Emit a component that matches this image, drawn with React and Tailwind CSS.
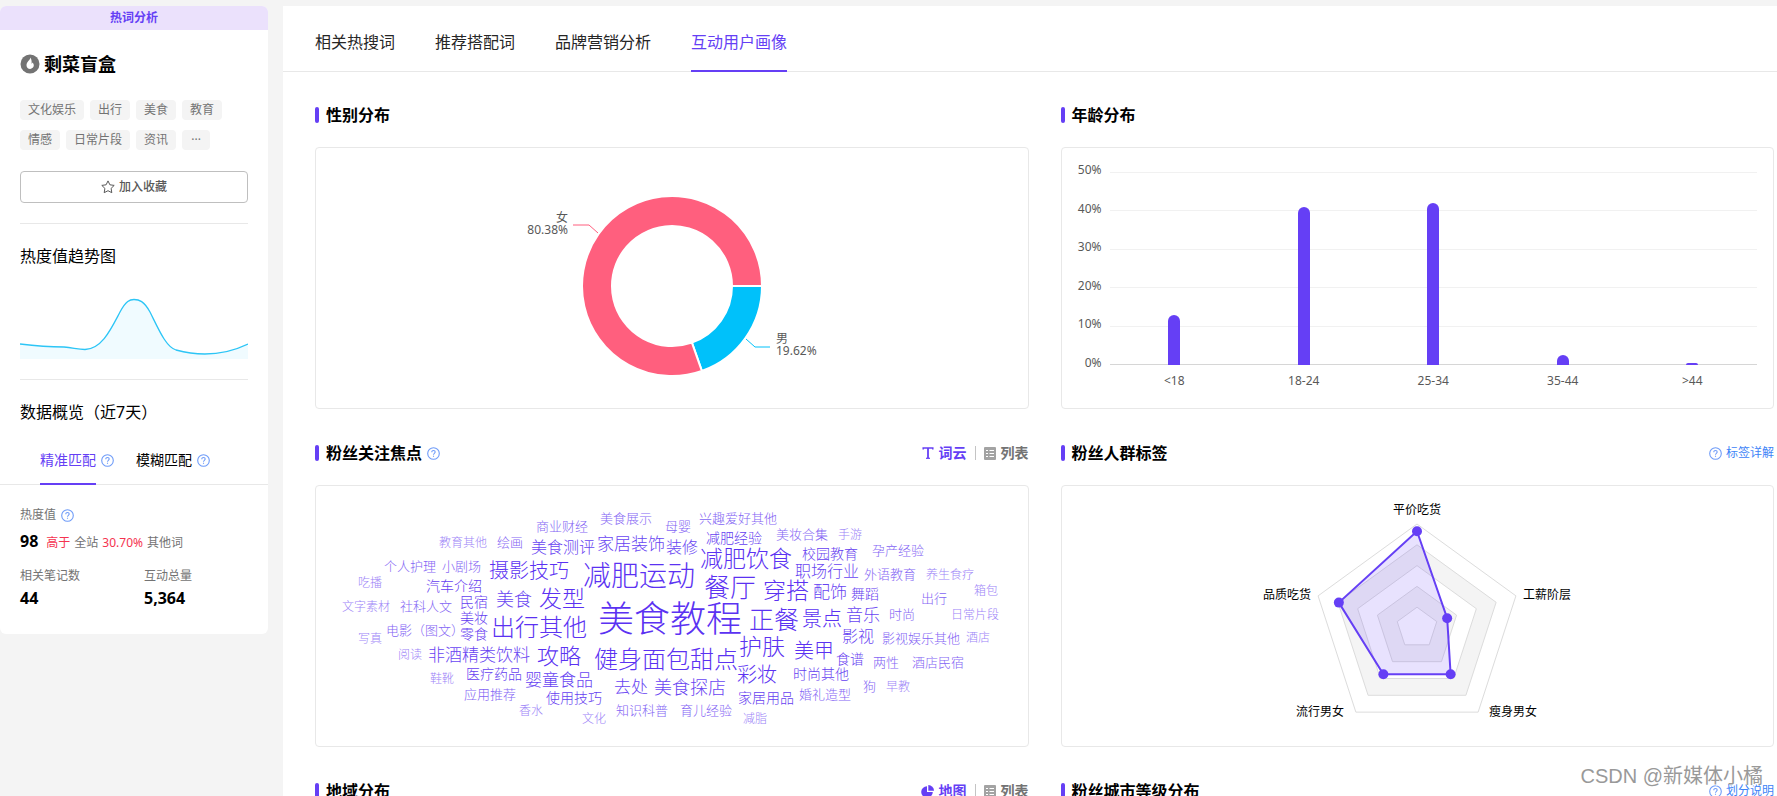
import React from "react";

const tags = ["文化娱乐", "出行", "美食", "教育", "情感", "日常片段", "资讯", "···"];

const ages = [
  { label: "<18", value: 13 },
  { label: "18-24", value: 41 },
  { label: "25-34", value: 42 },
  { label: "35-44", value: 2.6 },
  { label: ">44", value: 0.5 },
];

// [text, left, middle, font size] inside the 712 x 260 cloud
const words = [
  ["美食教程", 282, 133, 36],
  ["减肥运动", 267, 89, 28],
  ["餐厅", 388, 101, 26],
  ["正餐", 433, 133, 25],
  ["出行其他", 175, 141, 24],
  ["健身面包甜点", 278, 173, 24],
  ["发型", 223, 112, 23],
  ["减肥饮食", 384, 72, 23],
  ["穿搭", 447, 104, 23],
  ["护肤", 423, 160, 23],
  ["攻略", 221, 169, 22],
  ["摄影技巧", 173, 85, 20],
  ["景点", 486, 133, 20],
  ["美甲", 478, 165, 20],
  ["彩妆", 421, 189, 20],
  ["美食", 180, 113, 18],
  ["美食探店", 338, 201, 18],
  ["家居装饰", 281, 57, 17],
  ["非酒精类饮料", 112, 168, 17],
  ["婴童食品", 209, 193, 17],
  ["去处", 298, 200, 17],
  ["配饰", 497, 105, 17],
  ["音乐", 530, 128, 17],
  ["美食测评", 215, 61, 16],
  ["装修", 350, 61, 16],
  ["职场行业", 479, 85, 16],
  ["影视", 526, 150, 16],
  ["汽车介绍", 110, 100, 14],
  ["民宿", 144, 116, 14],
  ["美妆", 144, 132, 14],
  ["零食", 144, 148, 14],
  ["医疗药品", 150, 188, 14],
  ["使用技巧", 230, 212, 14],
  ["减肥经验", 390, 52, 14],
  ["校园教育", 486, 68, 14],
  ["舞蹈", 535, 108, 14],
  ["食谱", 520, 173, 14],
  ["时尚其他", 477, 188, 14],
  ["家居用品", 422, 212, 14],
  ["商业财经", 220, 40, 13],
  ["美食展示", 284, 32, 13],
  ["母婴", 349, 40, 13],
  ["绘画", 181, 56, 13],
  ["个人护理", 68, 80, 13],
  ["小剧场", 126, 80, 13],
  ["社科人文", 84, 120, 13],
  ["电影（图文）", 70, 144, 13],
  ["应用推荐", 148, 208, 13],
  ["知识科普", 300, 224, 13],
  ["兴趣爱好其他", 383, 32, 13],
  ["美妆合集", 460, 48, 13],
  ["孕产经验", 556, 64, 13],
  ["外语教育", 548, 88, 13],
  ["出行", 605, 112, 13],
  ["时尚", 573, 128, 13],
  ["影视娱乐其他", 566, 152, 13],
  ["两性", 557, 176, 13],
  ["酒店民宿", 596, 176, 13],
  ["婚礼造型", 483, 208, 13],
  ["狗", 547, 200, 13],
  ["育儿经验", 364, 224, 13],
  ["教育其他", 123, 57, 12],
  ["吃播", 42, 97, 12],
  ["文字素材", 26, 121, 12],
  ["写真", 42, 153, 12],
  ["阅读", 82, 169, 12],
  ["鞋靴", 114, 193, 12],
  ["香水", 203, 225, 12],
  ["文化", 266, 233, 12],
  ["手游", 522, 49, 12],
  ["养生食疗", 610, 89, 12],
  ["箱包", 658, 105, 12],
  ["日常片段", 635, 129, 12],
  ["酒店", 650, 152, 12],
  ["早教", 570, 201, 12],
  ["减脂", 427, 233, 12],
];

const wordTone = (size) => {
  if (size >= 20) return "text-[#5b32f2]";
  if (size >= 16) return "text-[#6844f2]";
  if (size >= 14) return "text-[#6640f0]";
  if (size >= 13) return "text-[#8465f4]";
  return "text-[#9c84f7]";
};

const HelpIcon = () => (
  <svg className="w-[13px] h-[13px] shrink-0" viewBox="0 0 13 13" fill="none" stroke="#6f9cf8" strokeWidth="1.1" aria-hidden>
    <circle cx="6.5" cy="6.5" r="5.8" />
    <path d="M4.8 5.2c0-1 .7-1.7 1.7-1.7s1.7.7 1.7 1.6c0 1.2-1.7 1.3-1.7 2.6" />
    <path d="M6.5 8.7v1.1" />
  </svg>
);

const ListIcon = () => (
  <svg className="w-3 h-[13px]" viewBox="0 0 12 13" aria-hidden>
    <rect width="12" height="13" rx="1" fill="#a3a3a3" />
    <path d="M2 3.5h2M5.5 3.5H10M2 6.5h2M5.5 6.5H10M2 9.5h2M5.5 9.5H10" stroke="#fff" strokeWidth="1.2" />
  </svg>
);

const TextIcon = () => (
  <svg className="w-3 h-3" viewBox="0 0 12 12" fill="none" stroke="#653ff5" aria-hidden>
    <path d="M1.2 2.6V1h9.6v1.600" strokeWidth="1.5" />
    <path d="M6 1v10" strokeWidth="1.8" />
    <path d="M4 11.3h4" strokeWidth="1.2" />
  </svg>
);

const PieIcon = () => (
  <svg className="w-[13px] h-[13px]" viewBox="0 0 13 13" fill="#653ff5" aria-hidden>
    <path d="M6 1.2A5.8 5.8 0 1 0 11.8 7H6z" />
    <path d="M7.3 0v5.7H13A5.7 5.7 0 0 0 7.3 0z" />
  </svg>
);

function ViewSwitch({ icon, label }) {
  return (
    <div className="flex items-center text-sm font-bold">
      <button className="flex items-center gap-[5px] text-[#653ff5]">{icon}{label}</button>
      <span className="w-px h-3.5 mx-2 bg-[#c4c4c4]" />
      <button className="flex items-center gap-[5px] text-[#737373]"><ListIcon />列表</button>
    </div>
  );
}

const HelpLink = ({ children }) => (
  <a href="#help" className="flex items-center gap-1 text-xs text-[#3d83f7]"><HelpIcon />{children}</a>
);

function Section({ title, help, extra, children }) {
  return (
    <section>
      <div className="flex items-center justify-between h-6 mb-5">
        <h2 className="flex items-center text-base font-bold text-black">
          <span className="w-1 h-4 mr-[7px] rounded-sm bg-[#653ff5]" />
          {title}
          {help && <span className="ml-[5px]"><HelpIcon /></span>}
        </h2>
        {extra}
      </div>
      <div className="h-[262px] border border-[#e8e8e8] rounded">{children}</div>
    </section>
  );
}

const polar = (cx, cy, r, deg) => {
  const a = (deg * Math.PI) / 180;
  return [cx + r * Math.cos(a), cy + r * Math.sin(a)];
};

function arc(from, to, outer, inner) {
  const large = to - from > 180 ? 1 : 0;
  const [a, b, c, d] = [polar(180, 138, outer, from), polar(180, 138, outer, to), polar(180, 138, inner, to), polar(180, 138, inner, from)];
  return `M${a} A${outer} ${outer} 0 ${large} 1 ${b} L${c} A${inner} ${inner} 0 ${large} 0 ${d} Z`;
}

function GenderChart() {
  const split = 0.1962 * 360;
  return (
    <svg className="block mx-auto w-[360px] h-[260px] text-xs" viewBox="0 0 360 260">
      <g stroke="#fff" strokeWidth="2">
        <path d={arc(0, split, 90, 60)} fill="#00c1fa" />
        <path d={arc(split, 360, 90, 60)} fill="#ff5f7e" />
      </g>
      <path d="M81 77h16l9 8" fill="none" stroke="#ff5f7e" />
      <path d="M254 191l9 8h15" fill="none" stroke="#00c1fa" />
      <g fill="#595959">
        <text x="76" y="74" textAnchor="end">女</text>
        <text x="76" y="86" textAnchor="end">80.38%</text>
        <text x="284" y="195">男</text>
        <text x="284" y="207">19.62%</text>
      </g>
    </svg>
  );
}

function AgeChart() {
  return (
    <div className="flex gap-2 pt-6 pr-4 text-xs text-[#595959]">
      <div className="flex flex-col justify-between w-10 h-[209px] -mt-2.5 text-right leading-4">
        {[50, 40, 30, 20, 10, 0].map((n) => <span key={n}>{n}%</span>)}
      </div>
      <div className="flex-1">
        <div className="relative h-[193px]">
          <div className="absolute inset-0 flex flex-col justify-between">
            {[0, 1, 2, 3, 4].map((n) => <div key={n} className="h-px bg-[#f1f1f1]" />)}
            <div className="h-px bg-[#d6d6d6]" />
          </div>
          <div className="relative grid grid-cols-5 items-end justify-items-center h-full">
            {ages.map((a) => (
              <div key={a.label} className="w-3 rounded-t-full bg-[#653ff5]" style={{ height: `${a.value * 2}%` }} />
            ))}
          </div>
        </div>
        <div className="grid grid-cols-5 mt-2 text-center leading-4">
          {ages.map((a) => <span key={a.label}>{a.label}</span>)}
        </div>
      </div>
    </div>
  );
}

function WordCloud() {
  return (
    <div className="relative w-[712px] h-[260px] mx-auto">
      {words.map(([text, left, middle, size]) => (
        <span
          key={text}
          className={`absolute -translate-y-1/2 whitespace-nowrap leading-none font-light ${wordTone(size)}`}
          style={{ left, top: middle, fontSize: size }}
        >
          {text}
        </span>
      ))}
    </div>
  );
}

function RadarChart() {
  const values = [0.93, 0.305, 0.55, 0.55, 0.79];
  const point = (r, i) => polar(180, 142, r, i * 72 - 90);
  const ring = (r) => values.map((_, i) => point(r, i)).join(" ");
  const dots = values.map((v, i) => point(v * 104, i));
  return (
    <svg className="block mx-auto w-[360px] h-[260px] text-xs" viewBox="0 0 360 260">
      {[5, 4, 3, 2, 1].map((n) => (
        <polygon key={n} points={ring(n * 20.8)} fill={n % 2 ? "#fff" : "#f4f4f4"} stroke="#dcdcdc" />
      ))}
      <polygon points={dots.join(" ")} fill="#653ff5" fillOpacity="0.15" stroke="#653ff5" strokeWidth="2" />
      {dots.map(([x, y], i) => <circle key={i} cx={x} cy={y} r="5" fill="#653ff5" />)}
      <text x="180" y="28" textAnchor="middle">平价吃货</text>
      <text x="286" y="113">工薪阶层</text>
      <text x="252" y="230">瘦身男女</text>
      <text x="107" y="230" textAnchor="end">流行男女</text>
      <text x="74" y="113" textAnchor="end">品质吃货</text>
    </svg>
  );
}

function Sidebar() {
  return (
    <aside className="w-[268px] shrink-0 self-start pb-6 bg-white rounded-md overflow-hidden">
      <div className="h-6 bg-[#ebe1fc] text-center text-xs leading-6 font-bold text-[#653ff5]">热词分析</div>

      <div className="px-5">
        <h1 className="flex items-center gap-1 h-7 mt-5 text-lg leading-6 font-bold text-black">
          <svg className="w-5 h-5" viewBox="0 0 20 20" aria-hidden>
            <circle cx="10" cy="10" r="9.5" fill="#737373" />
            <path d="M10.4 3.6c.3 2-3.9 4.200-3.900 7.600 0 2.300 1.600 3.700 3.600 3.700s3.700-1.500 3.700-3.600c0-1.300-.6-2.300-1.300-2.900-.1.700-.4 1.100-.9 1.300.3-2.400-.2-4.600-1.200-6.100z" fill="#fff" />
          </svg>
          剩菜盲盒
        </h1>

        <ul className="flex flex-wrap gap-x-1.5 gap-y-2.5 mt-[22px] text-xs text-[#737373]">
          {tags.map((t) => <li key={t} className="min-w-7 px-2 text-center leading-5 bg-[#f4f4f4] rounded-sm">{t}</li>)}
        </ul>

        <button className="flex items-center justify-center gap-1 w-full h-8 mt-[21px] border border-[#bfbfbf] rounded-sm text-xs font-medium text-[#595959]">
          <svg className="w-3.5 h-3.5" viewBox="0 0 14 14" fill="none" stroke="currentColor" strokeLinejoin="round" aria-hidden>
            <path d="M7 .9l1.900 3.900 4.300.6-3.100 3 .7 4.300L7 10.700l-3.800 2 .7-4.300-3.100-3 4.300-.6z" />
          </svg>
          加入收藏
        </button>

        <div className="mt-5 pt-5 border-t border-[#e8e8e8]">
          <h3 className="text-base text-black">热度值趋势图</h3>
        </div>
        <svg className="block w-full h-[72px] mt-[19px]" viewBox="0 0 228 72" preserveAspectRatio="none" aria-hidden>
          <path d="M0 57C16 59 30 60 44 60C54 61 58 62.500 65 62.500C82 62 91 42 100 25C106 13.500 110 12.500 114 12.500C119 12.500 124 14 130 25C139 43 146 60 156 63C178 69 203 69 228 57V72H0z" fill="#f0fbff" />
          <path d="M0 57C16 59 30 60 44 60C54 61 58 62.500 65 62.500C82 62 91 42 100 25C106 13.500 110 12.500 114 12.500C119 12.500 124 14 130 25C139 43 146 60 156 63C178 69 203 69 228 57" fill="none" stroke="#2cc5f6" strokeWidth="1.300" />
        </svg>
        <div className="mt-5 pt-5 border-t border-[#e8e8e8]">
          <h3 className="text-base text-black">数据概览（近7天）</h3>
        </div>
      </div>

      <div className="flex gap-[22px] mt-[26px] px-10 border-b border-[#e8e8e8] text-sm">
        <button className="flex items-start gap-[5px] h-[35px] -mb-px text-[#653ff5]">
          <span className="h-full border-b-2 border-[#653ff5]">精准匹配</span>
          <span className="pt-1"><HelpIcon /></span>
        </button>
        <button className="flex items-start gap-[5px] h-[35px] -mb-px text-black">
          <span>模糊匹配</span>
          <span className="pt-1"><HelpIcon /></span>
        </button>
      </div>

      <div className="px-5 pt-5 text-xs text-[#737373]">
        <div className="flex items-center gap-[5px] h-5">热度值<HelpIcon /></div>
        <p className="flex items-baseline gap-1 h-6 mt-1">
          <b className="mr-1 text-base leading-6 text-black">98</b>
          <span className="text-[#f5334f]">高于</span>
          <span>全站</span>
          <span className="text-[#f5334f]">30.70%</span>
          <span>其他词</span>
        </p>
        <div className="grid grid-cols-[124px_1fr] mt-[13px]">
          <div>
            <p className="leading-5">相关笔记数</p>
            <b className="block text-base text-black">44</b>
          </div>
          <div>
            <p className="leading-5">互动总量</p>
            <b className="block text-base text-black">5,364</b>
          </div>
        </div>
      </div>
    </aside>
  );
}

export default function App() {
  const tabs = ["相关热搜词", "推荐搭配词", "品牌营销分析", "互动用户画像"];
  return (
    <div className="relative flex gap-[15px] h-screen pt-1.5 overflow-hidden bg-[#f4f4f4] font-['Noto_Sans','Noto_Sans_CJK_SC',sans-serif]">
      <Sidebar />

      <main className="flex-1 min-w-0 bg-white">
        <nav className="flex gap-10 h-[66px] pl-8 border-b border-[#e8e8e8]">
          {tabs.map((t) => (
            <button
              key={t}
              className={`h-[66px] pt-2 border-b-2 leading-[56px] ${t === "互动用户画像" ? "border-[#653ff5] text-[#653ff5]" : "border-transparent text-[#262626]"}`}
            >
              {t}
            </button>
          ))}
        </nav>

        <div className="grid grid-cols-2 gap-8 pt-[31px] pl-8 pr-[3px]">
          <Section title="性别分布"><GenderChart /></Section>
          <Section title="年龄分布"><AgeChart /></Section>
          <Section title="粉丝关注焦点" help extra={<ViewSwitch icon={<TextIcon />} label="词云" />}>
            <WordCloud />
          </Section>
          <Section title="粉丝人群标签" extra={<HelpLink>标签详解</HelpLink>}><RadarChart /></Section>
          <Section title="地域分布" extra={<ViewSwitch icon={<PieIcon />} label="地图" />} />
          <Section title="粉丝城市等级分布" extra={<HelpLink>划分说明</HelpLink>} />
        </div>
      </main>

      <div className="absolute right-3.5 bottom-1.5 text-xl leading-7 text-[#999] [text-shadow:1px_1px_0_#fff] font-['Liberation_Sans','Noto_Sans_CJK_SC',sans-serif]">CSDN @新媒体小橘</div>
    </div>
  );
}
